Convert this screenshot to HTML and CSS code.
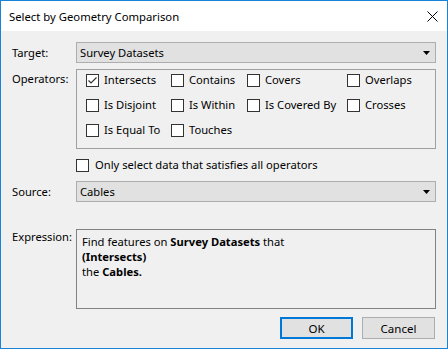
FILE: index.html
```html
<!DOCTYPE html>
<html lang="en">
  <head>
    <meta charset="UTF-8" />
    <title>Select by Geometry Comparison</title>
    <link rel="stylesheet" href="styles.css">
  </head>
  <body>
    <div class="dialog">
      <div class="titlebar">
        <span class="title">Select by Geometry Comparison</span>
        <svg class="close" width="11" height="11" viewBox="0 0 11 11">
          <path d="M0.5 0.5 L10.5 10.5 M10.5 0.5 L0.5 10.5" stroke="#000" stroke-width="1" fill="none" />
        </svg>
      </div>
      <div class="content">
        <div class="row row-target">
          <span class="lbl">Target:</span>
          <div class="combo">
            <span>Survey Datasets</span>
            <svg class="arrow" width="7" height="4" viewBox="0 0 7 4"><path d="M0 0 H7 L3.5 4 Z" fill="#000" /></svg>
          </div>
        </div>

        <div class="row row-ops">
          <span class="lbl">Operators:</span>
          <div class="ops">
            <label class="check"><span class="box checked"><svg width="11" height="11" viewBox="0 0 11 11"><path d="M1.5 5.5 L4 8 L9.5 2.5" stroke="#333" stroke-width="1.2" fill="none" /></svg></span>Intersects</label>
            <label class="check"><span class="box"></span>Contains</label>
            <label class="check"><span class="box"></span>Covers</label>
            <label class="check"><span class="box"></span>Overlaps</label>
            <label class="check"><span class="box"></span>Is Disjoint</label>
            <label class="check"><span class="box"></span>Is Within</label>
            <label class="check"><span class="box"></span>Is Covered By</label>
            <label class="check"><span class="box"></span>Crosses</label>
            <label class="check"><span class="box"></span>Is Equal To</label>
            <label class="check"><span class="box"></span>Touches</label>
          </div>
        </div>

        <div class="row row-all">
          <span></span>
          <label class="check all"><span class="box"></span>Only select data that satisfies all operators</label>
        </div>

        <div class="row row-source">
          <span class="lbl">Source:</span>
          <div class="combo">
            <span>Cables</span>
            <svg class="arrow" width="7" height="4" viewBox="0 0 7 4"><path d="M0 0 H7 L3.5 4 Z" fill="#000" /></svg>
          </div>
        </div>

        <div class="row row-expr">
          <span class="lbl">Expression:</span>
          <div class="expr">
            Find features on <b>Survey Datasets</b> that<br />
            <b>(Intersects)</b><br />
            the <b>Cables.</b>
          </div>
        </div>

        <div class="buttons">
          <button class="btn default">OK</button>
          <button class="btn">Cancel</button>
        </div>
      </div>
    </div>
  </body>
</html>
```

FILE: styles.css
```css
* {
  padding: 0;
  margin: 0;
  box-sizing: border-box;
}
body {
  width: 448px;
  height: 349px;
  font-family: "Noto Sans", "Liberation Sans", sans-serif;
  font-size: 11.2px;
  color: #000;
  background: #f0f0f0;
}
.dialog {
  width: 448px;
  height: 349px;
  border: 1px solid #1883d7;
  background-color: #f0f0f0;
  display: flex;
  flex-direction: column;
}
.titlebar {
  height: 30px;
  background-color: #ffffff;
  display: flex;
  align-items: center;
  justify-content: space-between;
  padding: 0 9px 0 8px;
}
.title {
  font-size: 11.3px;
}
.close {
  display: block;
}
.content {
  padding: 11px 11px 0 11px;
}
.row {
  display: grid;
  grid-template-columns: 64px 360px;
}
.lbl {
  line-height: 16px;
}
.row-target {
  align-items: center;
}
.combo {
  height: 21px;
  background-color: #e1e1e1;
  border: 1px solid #adadad;
  display: flex;
  align-items: center;
  justify-content: space-between;
  padding: 0 5px 0 3px;
}
.arrow {
  display: block;
}
.row-ops {
  margin-top: 6px;
}
.row-ops .lbl {
  padding-top: 2px;
}
.ops {
  height: 80px;
  border: 1px solid #a0a0a0;
  padding: 2px 0 0 9px;
  display: grid;
  grid-template-columns: 85px 76px 100px auto;
  grid-auto-rows: 16px;
  row-gap: 9px;
}
.check {
  display: flex;
  align-items: center;
  gap: 5px;
  line-height: 16px;
  white-space: nowrap;
}
.box {
  width: 13px;
  height: 13px;
  border: 1px solid #333333;
  background-color: #ffffff;
  display: flex;
  align-items: center;
  justify-content: center;
  flex-shrink: 0;
}
.box svg {
  display: block;
}
.row-all {
  margin-top: 8px;
}
.check.all {
  gap: 6px;
}
.row-source {
  margin-top: 8px;
  align-items: center;
}
.row-expr {
  margin-top: 27px;
}
.expr {
  height: 80px;
  border: 1px solid #828282;
  padding: 4px 5px;
  line-height: 15px;
}
.expr b {
  font-weight: 700;
}
.buttons {
  margin-top: 8px;
  display: flex;
  justify-content: flex-end;
  gap: 9px;
  padding-right: 1px;
}
.btn {
  width: 73px;
  height: 22px;
  font-family: inherit;
  font-size: 11.5px;
  color: #000;
  background-color: #e1e1e1;
  border: 1px solid #adadad;
}
.btn.default {
  border: 2px solid #0078d7;
}
```
